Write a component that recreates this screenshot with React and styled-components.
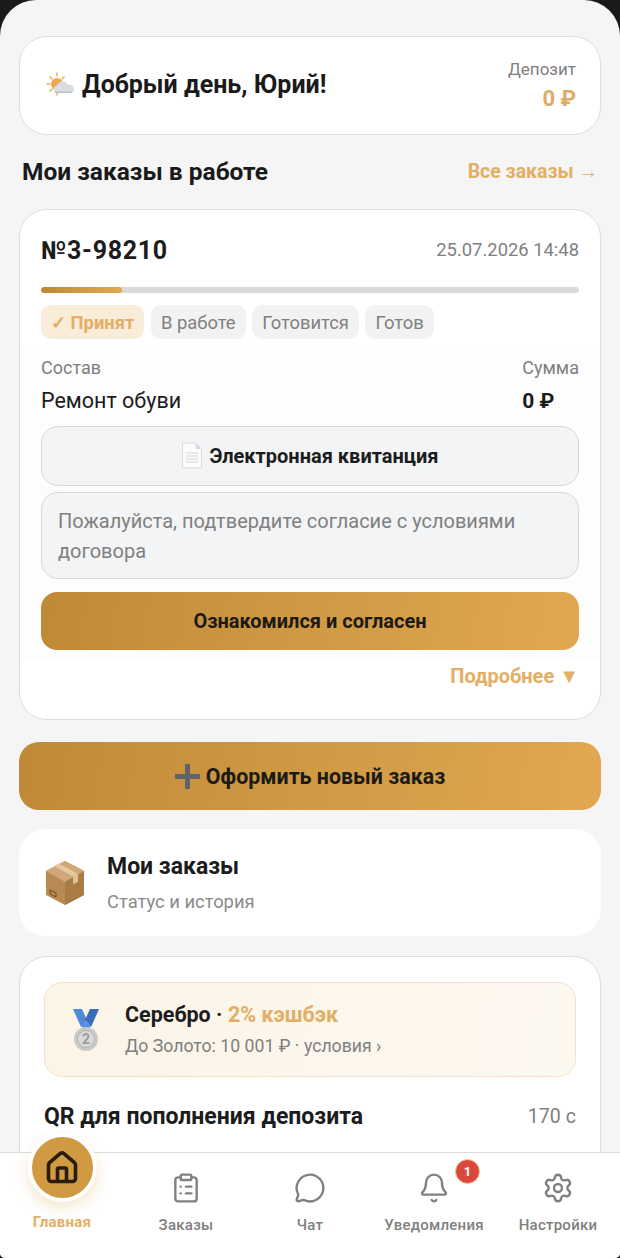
import React from 'react';
import styled, { createGlobalStyle } from 'styled-components';
import { House, ClipboardList, MessageCircle, Bell, Settings } from 'lucide-react';

const Global = createGlobalStyle`
  html, body { margin: 0; padding: 0; background: #1c1a18; }
  * { box-sizing: border-box; }
  body { font-family: Roboto, "Noto Sans", sans-serif; color: #1c1c1c; }
`;

const Screen = styled.div`
  position: relative;
  width: 620px;
  height: 1258px;
  overflow: hidden;
  background: #f5f5f5;
  border-radius: 36px 36px 5px 5px;
`;

const Content = styled.main`
  display: flex;
  flex-direction: column;
  padding: 36px 19px 0;
`;

const Card = styled.section`
  background: #fff;
  border: 1.5px solid #dddddd;
  border-radius: 28px;
`;

const GreetCard = styled(Card)`
  height: 99px;
  padding: 0 24px 0 25px;
  display: flex;
  align-items: center;
  justify-content: space-between;
`;

const Greeting = styled.div`
  display: flex;
  align-items: center;
  gap: 6px;
  font-size: 25px;
  font-weight: 700;
  color: #1a1a1a;
  margin-bottom: 2px;
`;

const Deposit = styled.div`
  display: flex;
  flex-direction: column;
  align-items: flex-end;
  gap: 7px;
`;

const Muted = styled.div`
  font-size: ${p => p.$size || 18}px;
  color: ${p => p.$color || '#7f7f7f'};
  line-height: 1.2;
`;

const GoldValue = styled.div`
  font-size: 22px;
  font-weight: 700;
  color: #e0ab62;
  line-height: 26px;
`;

const SectionHead = styled.div`
  display: flex;
  align-items: center;
  justify-content: space-between;
  padding: 0 3px;
  height: 30px;
  margin: 22px 0 22px;
`;

const SectionTitle = styled.h2`
  margin: 0;
  font-size: 24.5px;
  line-height: 28px;
  font-weight: 700;
  color: #1a1a1a;
`;

const AllLink = styled.a`
  font-size: 19.5px;
  font-weight: 700;
  line-height: 34px;
  color: #e3ae65;
`;

const OrderCard = styled(Card)`
  height: 511px;
  padding: 20px 21px 0;
  display: flex;
  flex-direction: column;
`;

const OrderHead = styled.div`
  display: flex;
  align-items: center;
  justify-content: space-between;
  height: 40px;
`;

const OrderNo = styled.div`
  font-size: 25px;
  font-weight: 700;
  letter-spacing: 0.7px;
  color: #1c1c1c;
`;

const Track = styled.div`
  height: 6px;
  border-radius: 3px;
  background: #d9d9d9;
  margin-top: 17px;
  overflow: hidden;
`;

const Fill = styled.div`
  height: 100%;
  border-radius: 3px;
  background: linear-gradient(90deg, #bd8733, #e2a94f);
`;

const Chips = styled.div`
  display: flex;
  gap: 6.5px;
  margin-top: 12px;
`;

const Chip = styled.span`
  height: 34px;
  padding: 0 10px;
  display: inline-flex;
  align-items: center;
  border-radius: 10px;
  font-size: 18.4px;
  font-weight: ${p => (p.$active ? 700 : 400)};
  background: ${p => (p.$active ? '#f9edd9' : '#f2f2f2')};
  color: ${p => (p.$active ? '#e3ae65' : '#808080')};
`;

const Details = styled.div`
  margin: 6px -21px 0;
  padding: 12px 21px 11px;
  background: #fdfdfd;
`;

const SummaryRow = styled.div`
  display: flex;
  justify-content: space-between;
`;

const SummaryCol = styled.div`
  display: flex;
  flex-direction: column;
  gap: 9px;
`;

const ItemName = styled.div`
  font-size: 21.5px;
  line-height: 26px;
  color: #1c1c1c;
`;

const SumValue = styled.div`
  font-size: 21px;
  font-weight: 700;
  line-height: 26px;
  color: #1c1c1c;
`;

const ReceiptButton = styled.div`
  height: 60px;
  margin-top: 12px;
  display: flex;
  align-items: center;
  justify-content: center;
  gap: 6px;
  border: 1.5px solid #d8d8da;
  border-radius: 17px;
  background: #f3f4f6;
  font-size: 20px;
  font-weight: 700;
  color: #1c1c1c;
`;

const Notice = styled.div`
  height: 87px;
  margin-top: 6px;
  padding: 13px 16px;
  border: 1.5px solid #d8d8da;
  border-radius: 17px;
  background: #f3f4f6;
  font-size: 20px;
  line-height: 30px;
  color: #808080;
`;

const GoldButton = styled.div`
  display: flex;
  align-items: center;
  justify-content: center;
  gap: 6px;
  height: ${p => p.$h}px;
  margin-top: ${p => p.$mt || 0}px;
  border-radius: ${p => p.$r}px;
  background: linear-gradient(100deg, #bf8a37, #e2a851);
  font-size: ${p => p.$size}px;
  font-weight: 700;
  color: #1c1a16;
`;

const More = styled.div`
  margin-top: 3px;
  text-align: right;
  font-size: 20px;
  font-weight: 700;
  color: #e3ae65;
`;

const OrdersCard = styled.section`
  height: 107px;
  margin-top: 19px;
  padding: 0 26px;
  display: flex;
  align-items: center;
  gap: 22px;
  background: #fff;
  border-radius: 26px;
`;

const OrdersTitle = styled.div`
  font-size: 23px;
  font-weight: 700;
  line-height: 28px;
  margin-top: 2px;
  color: #1c1c1c;
`;

const OrdersSub = styled(Muted)`
  margin-top: 10px;
`;

const BonusCard = styled(Card)`
  height: 400px;
  margin-top: 20px;
  padding: 25px 24px;
`;

const TierBanner = styled.div`
  height: 95px;
  padding: 0 26px 0 28px;
  display: flex;
  align-items: center;
  gap: 26px;
  border: 1.5px solid #f2e3c8;
  border-radius: 18px;
  background: linear-gradient(100deg, #fbf4e7, #fdf8f0);
`;

const TierTitle = styled.div`
  font-size: 21.5px;
  font-weight: 700;
  line-height: 26px;
  color: #1c1c1c;
`;

const TierSub = styled(Muted)`
  margin-top: 8px;
`;

const Gold = styled.span`
  color: #e3ae65;
`;

const QrHead = styled.div`
  display: flex;
  align-items: center;
  justify-content: space-between;
  margin-top: 26px;
`;

const QrTitle = styled.div`
  font-size: 23px;
  font-weight: 700;
  color: #1c1c1c;
`;

const Nav = styled.nav`
  position: absolute;
  left: 0;
  right: 0;
  bottom: 0;
  height: 106px;
  display: grid;
  grid-template-columns: repeat(5, 1fr);
  background: #fff;
  border-top: 1.5px solid #dcdcdc;
`;

const NavItem = styled.div`
  position: relative;
  display: flex;
  flex-direction: column;
  align-items: center;
  padding-top: ${p => (p.$active ? 0 : 19)}px;
  color: #808080;
`;

const NavLabel = styled.span`
  position: absolute;
  top: ${p => (p.$active ? 60 : 63)}px;
  white-space: nowrap;
  font-size: 15px;
  font-weight: ${p => (p.$active ? 700 : 500)};
  letter-spacing: 0.25px;
  line-height: 18px;
  color: ${p => (p.$active ? '#e3ae65' : '#808080')};
`;

const HomeBubble = styled.div`
  position: absolute;
  top: -20px;
  width: 69px;
  height: 69px;
  display: flex;
  align-items: center;
  justify-content: center;
  border: 4px solid #fff;
  border-radius: 50%;
  background: #cf9a41;
  color: #2a1c0c;
  box-shadow: 0 6px 14px rgba(226, 170, 90, 0.3);
`;

const Badge = styled.span`
  position: absolute;
  top: 6px;
  left: 83px;
  width: 25px;
  height: 25px;
  display: flex;
  align-items: center;
  justify-content: center;
  border-radius: 50%;
  border: 1px solid #f0cf8c;
  background: #d9483f;
  color: #fff;
  font-size: 13px;
  font-weight: 700;
`;

const SunCloud = () => (
  <svg width="31" height="28" viewBox="0 0 31 28" aria-hidden="true">
    <g stroke="#eeb25e" strokeWidth="1.6" strokeLinecap="round">
      <path d="M12 2v3M12 21v3M2 13h3M4.8 5.8l2.2 2.2M19.2 5.8L17 8M4.8 20.2L7 18" />
    </g>
    <circle cx="12" cy="13" r="6" fill="#eda94b" />
    <path d="M11 22a4 4 0 0 1 1-7.6A6 6 0 0 1 23 14a4.2 4.2 0 0 1 3.5 8z" fill="#d8dde2" />
    <path d="M11 22h15.5l1-1.4H9.6z" fill="#b9c2ca" />
  </svg>
);

const PageIcon = () => (
  <svg width="22" height="27" viewBox="0 0 22 27" aria-hidden="true">
    <path d="M1.5 1h13l6 6v19h-19z" fill="#fbfbfb" stroke="#dcdcdc" />
    <path d="M14.5 1v6h6z" fill="#d8dbe0" />
    <path d="M5 11h12M5 14h12M5 17h12M5 20h12" stroke="#d3d6da" strokeWidth="1.2" />
  </svg>
);

const PlusIcon = () => (
  <svg width="25" height="25" viewBox="0 0 25 25" aria-hidden="true">
    <path d="M10 0h5v10h10v5H15v10h-5V15H0v-5h10z" fill="#5f646b" />
  </svg>
);

const BoxIcon = () => (
  <svg width="40" height="46" viewBox="0 0 40 46" aria-hidden="true">
    <path d="M20 1L39 11v24L20 45 1 35V11z" fill="#b68a52" />
    <path d="M20 1L39 11 20 22 1 11z" fill="#d0a878" />
    <path d="M20 22L39 11v24L20 45z" fill="#a87c44" />
    <path d="M9 6l19 10.5 5-2.8L13.6 3.6z" fill="#e3c8a0" />
    <path d="M28 16.5l5-2.8v8l-5 2.8z" fill="#dcc096" />
    <path d="M5 30l6 3v4l-6-3z" fill="none" stroke="#6b4e28" strokeWidth="1" />
  </svg>
);

const MedalIcon = () => (
  <svg width="26" height="44" viewBox="0 0 26 44" aria-hidden="true">
    <path d="M0 1h9l5 11-6 7z" fill="#4f8ad9" />
    <path d="M26 1h-9l-5 11 6 7z" fill="#3a6bb8" />
    <path d="M8 18l5 5 5-5-5-6z" fill="#5a93dd" />
    <circle cx="13" cy="31" r="12" fill="#c9c9c9" />
    <circle cx="13" cy="31" r="8.5" fill="#dadada" stroke="#b2b2b2" />
    <text x="13" y="36" textAnchor="middle" fontFamily="Roboto, sans-serif" fontSize="14" fontWeight="700" fill="#9c9c9c">2</text>
  </svg>
);

const Ruble = '\u20BD';

export default function App() {
  return (
    <>
      <Global />
      <Screen>
        <Content>
          <GreetCard>
            <Greeting>
              <SunCloud />
              Добрый день, Юрий!
            </Greeting>
            <Deposit>
              <Muted $size={17}>Депозит</Muted>
              <GoldValue>0 {Ruble}</GoldValue>
            </Deposit>
          </GreetCard>

          <SectionHead>
            <SectionTitle>Мои заказы в работе</SectionTitle>
            <AllLink>Все заказы →</AllLink>
          </SectionHead>

          <OrderCard>
            <OrderHead>
              <OrderNo>№3-98210</OrderNo>
              <Muted $size={18.4}>25.07.2026 14:48</Muted>
            </OrderHead>
            <Track>
              <Fill style={{ width: `${(81 / 538) * 100}%` }} />
            </Track>
            <Chips>
              <Chip $active>✓ Принят</Chip>
              <Chip>В работе</Chip>
              <Chip>Готовится</Chip>
              <Chip>Готов</Chip>
            </Chips>
            <Details>
              <SummaryRow>
                <SummaryCol>
                  <Muted>Состав</Muted>
                  <ItemName>Ремонт обуви</ItemName>
                </SummaryCol>
                <SummaryCol>
                  <Muted>Сумма</Muted>
                  <SumValue>0 {Ruble}</SumValue>
                </SummaryCol>
              </SummaryRow>
              <ReceiptButton>
                <PageIcon />
                Электронная квитанция
              </ReceiptButton>
              <Notice>Пожалуйста, подтвердите согласие с условиями договора</Notice>
              <GoldButton $h={58} $r={16} $size={20} $mt={13}>Ознакомился и согласен</GoldButton>
            </Details>
            <More>Подробнее ▼</More>
          </OrderCard>

          <GoldButton $h={68} $r={20} $size={21.4} $mt={22}>
            <PlusIcon />
            Оформить новый заказ
          </GoldButton>

          <OrdersCard>
            <BoxIcon />
            <div>
              <OrdersTitle>Мои заказы</OrdersTitle>
              <OrdersSub $size={18.4} $color="#8a8a8a">Статус и история</OrdersSub>
            </div>
          </OrdersCard>

          <BonusCard>
            <TierBanner>
              <MedalIcon />
              <div>
                <TierTitle>Серебро · <Gold>2% кэшбэк</Gold></TierTitle>
                <TierSub $size={17.7}>До Золото: 10 001 {Ruble} · условия ›</TierSub>
              </div>
            </TierBanner>
            <QrHead>
              <QrTitle>QR для пополнения депозита</QrTitle>
              <Muted $size={19.6}>170 с</Muted>
            </QrHead>
          </BonusCard>
        </Content>

        <Nav>
          <NavItem $active>
            <HomeBubble><House size={36} strokeWidth={2.4} /></HomeBubble>
            <NavLabel $active>Главная</NavLabel>
          </NavItem>
          <NavItem>
            <ClipboardList size={32} strokeWidth={1.8} />
            <NavLabel>Заказы</NavLabel>
          </NavItem>
          <NavItem>
            <MessageCircle size={32} strokeWidth={1.8} />
            <NavLabel>Чат</NavLabel>
          </NavItem>
          <NavItem>
            <Bell size={32} strokeWidth={1.8} />
            <Badge>1</Badge>
            <NavLabel>Уведомления</NavLabel>
          </NavItem>
          <NavItem>
            <Settings size={32} strokeWidth={1.8} />
            <NavLabel>Настройки</NavLabel>
          </NavItem>
        </Nav>
      </Screen>
    </>
  );
}
